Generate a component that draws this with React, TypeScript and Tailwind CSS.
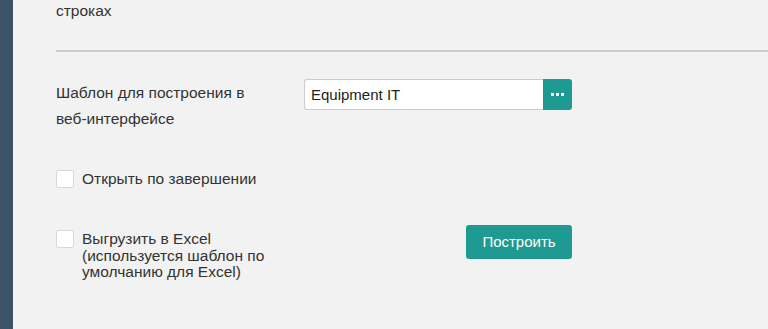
import React from "react";

const font = { fontFamily: '"Liberation Sans", Arial, sans-serif' };

const Checkbox: React.FC = () => (
  <span className="block h-[18px] w-[18px] shrink-0 rounded-[2px] border border-[#d9d9d9] bg-white" />
);

export default function App() {
  return (
    <div className="flex h-[329px] w-full overflow-hidden bg-[#f2f2f2] text-[#333333]" style={font}>
      <div className="w-[13px] shrink-0 bg-[#3c5267]" />
      <div className="flex-1 pl-[43px]">
        <p className="pt-px text-[15.5px] leading-[20px]">строках</p>
        <div className="mt-[29px] border-t-2 border-[#cccccc]" />

        <div className="mt-[27px] flex">
          <label className="w-[248px] shrink-0 pt-px text-[15.5px] leading-[26px]">
            Шаблон для построения в
            <br />
            веб-интерфейсе
          </label>
          <div className="flex h-[31px]">
            <input
              readOnly
              value="Equipment IT"
              className="h-full w-[239px] rounded-l-[3px] border border-r-0 border-[#cccccc] bg-white px-[6px] text-[15px] text-[#222222] outline-none"
              style={font}
            />
            <button className="flex h-full w-[29px] items-center justify-center gap-[2px] rounded-r-[3px] bg-[#1f9a92]">
              <span className="h-[3px] w-[3px] bg-white" />
              <span className="h-[3px] w-[3px] bg-white" />
              <span className="h-[3px] w-[3px] bg-white" />
            </button>
          </div>
        </div>

        <div className="mt-[37px] flex items-center gap-[8px]">
          <Checkbox />
          <span className="pt-px text-[15.5px] leading-[18px]">Открыть по завершении</span>
        </div>

        <div className="mt-[37px] flex items-start">
          <div className="mt-[5px] flex w-[410px] shrink-0 items-start gap-[8px]">
            <Checkbox />
            <span className="w-[200px] pt-px text-[15.5px] leading-[16.5px]">
              Выгрузить в Excel (используется шаблон по умолчанию для Excel)
            </span>
          </div>
          <button className="h-[34px] w-[106px] rounded-[3px] bg-[#1f9a92] text-[15px] text-white" style={font}>
            Построить
          </button>
        </div>
      </div>
    </div>
  );
}
